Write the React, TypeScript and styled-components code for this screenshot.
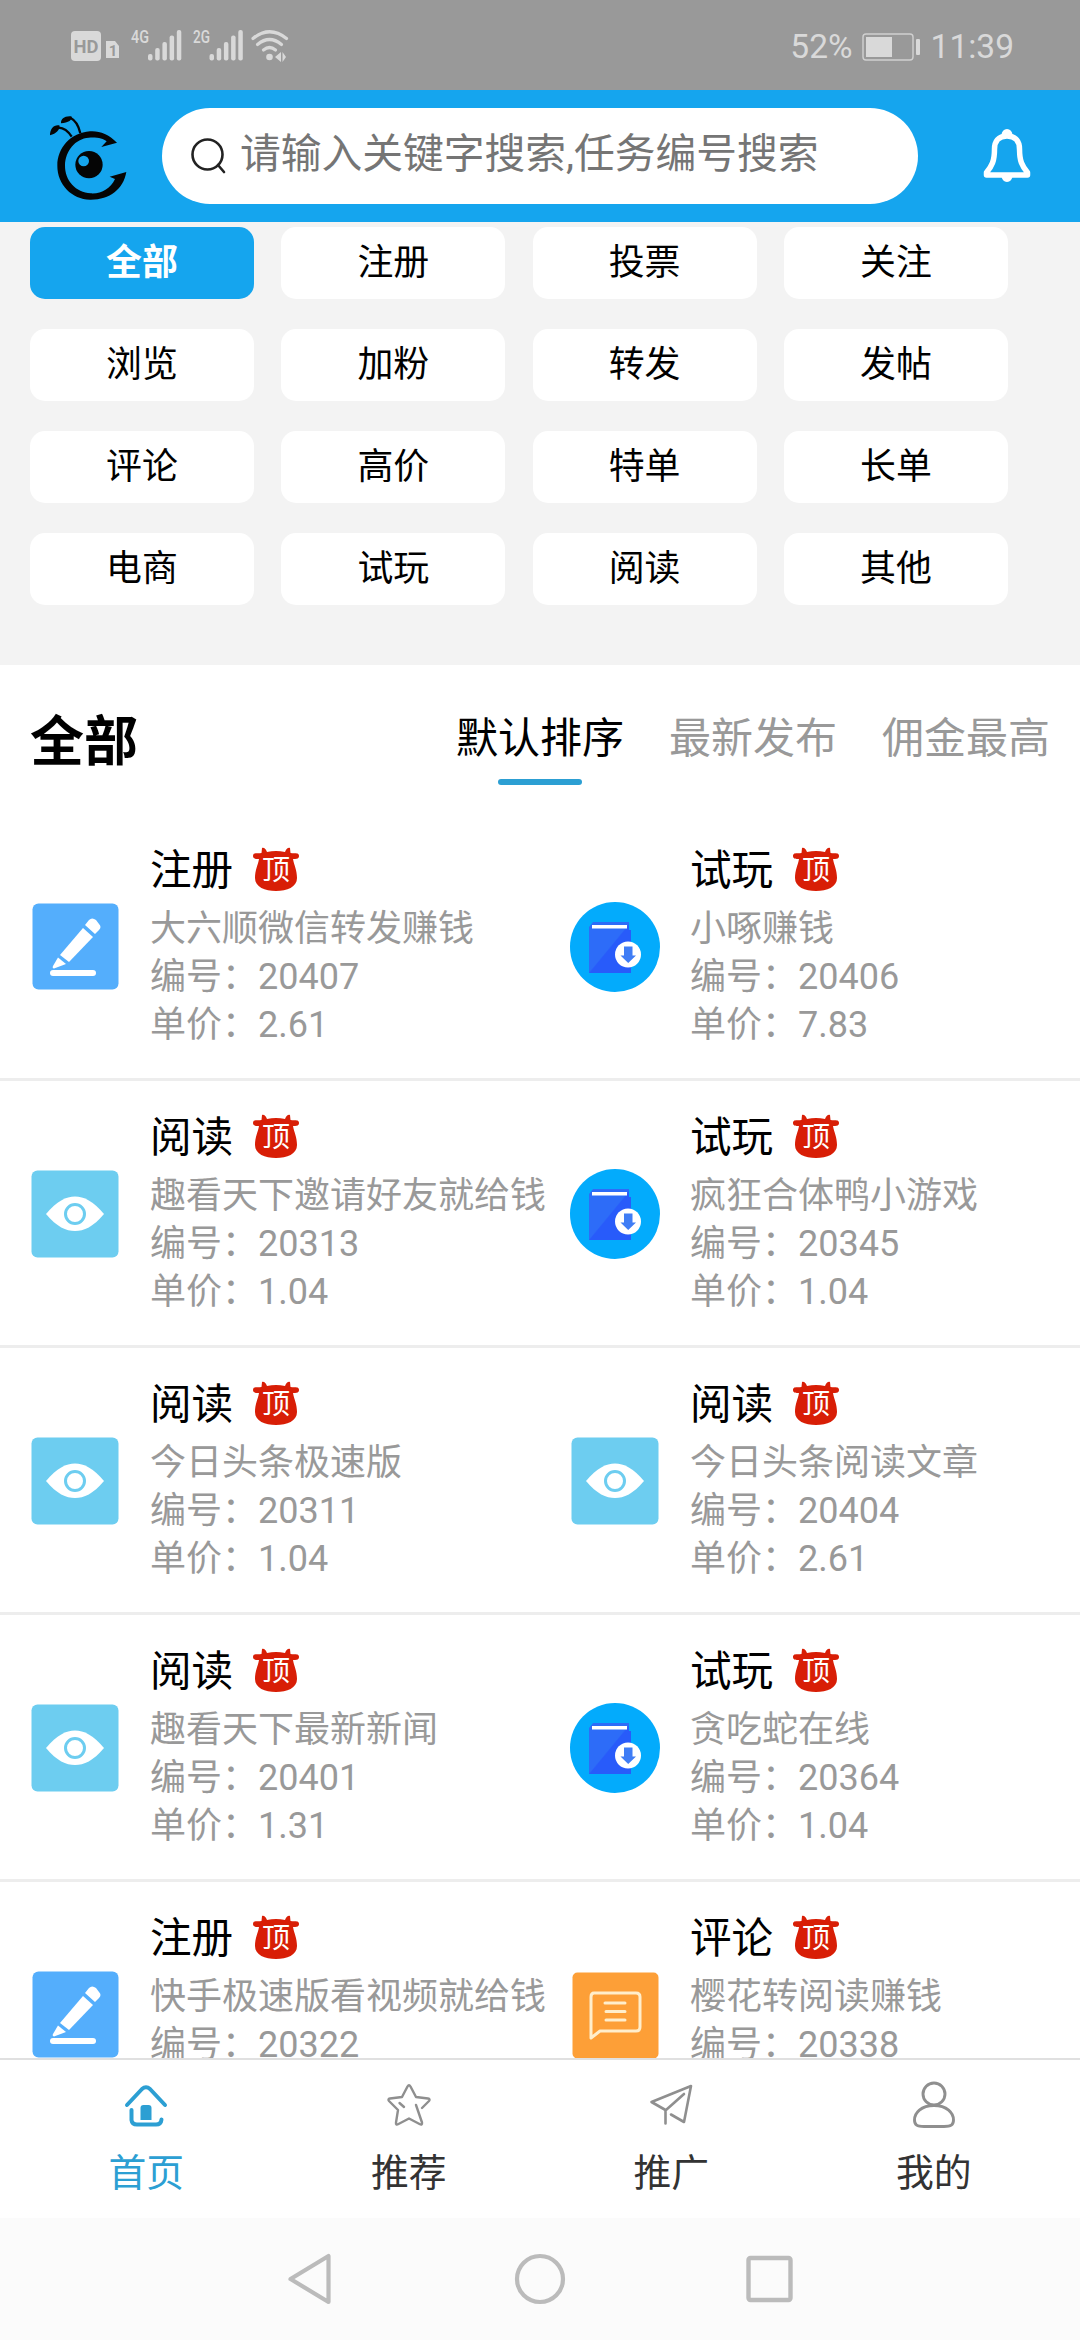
import React from 'react';
import styled, { createGlobalStyle } from 'styled-components';

const GlobalStyle = createGlobalStyle`
  * { box-sizing: border-box; }
  body {
    margin: 0;
    background: #fff;
    font-family: Roboto, "Noto Sans CJK SC", sans-serif;
  }
  svg { display: block; flex: none; overflow: visible; }
`;

const Screen = styled.div`
  width: 1080px;
  height: 2340px;
  display: flex;
  flex-direction: column;
  overflow: hidden;
  background: #fff;
`;

const StatusBar = styled.div`
  height: 90px;
  flex: none;
  display: flex;
  align-items: center;
  justify-content: space-between;
  padding: 0 66px 0 60px;
  background: #999;
  color: #d9d9d9;
`;

const StatusGroup = styled.div`
  display: flex;
  align-items: center;
  font-size: 33.5px;
  line-height: 40px;
  padding-top: 3px;
`;

const BatterySlot = styled.div`
  margin: 0 10px 0 9px;
`;

const Header = styled.header`
  height: 132px;
  flex: none;
  display: flex;
  align-items: center;
  padding: 0 49px 0 40px;
  background: #15a5ee;
`;

const SearchBox = styled.div`
  width: 756px;
  height: 96px;
  margin: 0 65px 0 22px;
  padding-left: 30px;
  display: flex;
  align-items: center;
  gap: 15px;
  border-radius: 48px;
  background: #fff;
`;

const Placeholder = styled.span`
  font-size: 40.75px;
  line-height: 60px;
  padding-bottom: 4px;
  color: #757575;
  white-space: nowrap;
`;

const Categories = styled.section`
  height: 443px;
  flex: none;
  display: grid;
  grid-template-columns: repeat(4, 224px);
  grid-auto-rows: 72px;
  column-gap: 27.3px;
  row-gap: 30px;
  padding: 5px 0 0 30px;
  background: #f3f3f3;
`;

const Chip = styled.div<{ $active?: boolean }>`
  display: flex;
  align-items: center;
  justify-content: center;
  border-radius: 15px;
  font-size: 35.9px;
  line-height: 50px;
  font-weight: ${p => (p.$active ? 700 : 400)};
  color: ${p => (p.$active ? '#fff' : '#000')};
  background: ${p => (p.$active ? '#15a5ee' : '#fff')};
`;

const SortBar = styled.section`
  height: 149px;
  flex: none;
  display: flex;
  justify-content: space-between;
  align-items: flex-start;
  padding: 36px 30px 0 30px;
`;

const SortTitle = styled.h2`
  margin: 0;
  padding-top: 2px;
  font-size: 54px;
  line-height: 80px;
  font-weight: 700;
  color: #000;
`;

const SortTabs = styled.div`
  display: flex;
  gap: 45px;
`;

const SortTab = styled.div<{ $active?: boolean }>`
  display: flex;
  flex-direction: column;
  align-items: center;
  font-size: 42px;
  line-height: 76px;
  color: ${p => (p.$active ? '#000' : '#999')};
  &::after {
    content: "";
    width: 84px;
    height: 6px;
    margin-top: 2px;
    border-radius: 3px;
    background: ${p => (p.$active ? '#2c9fd3' : 'transparent')};
  }
`;

const TaskList = styled.main`
  height: 1244px;
  flex: none;
  overflow: hidden;
`;

const TaskRow = styled.div`
  height: 267px;
  display: grid;
  grid-template-columns: 540px 540px;
  border-bottom: 3px solid #ededed;
`;

const Task = styled.article`
  display: flex;
  align-items: flex-start;
  padding-left: 30px;
  gap: 30px;
`;

const TaskIcon = styled.div`
  margin-top: 88px;
`;

const TaskText = styled.div`
  padding-top: 22px;
  white-space: nowrap;
`;

const TaskTitle = styled.div`
  display: flex;
  align-items: center;
  gap: 19.5px;
  height: 66px;
  font-size: 41.6px;
  line-height: 60px;
  color: #000;
`;

const TaskName = styled.span`
  padding-top: 4px;
`;

const TaskDetails = styled.div`
  padding-top: 3px;
`;

const TaskLine = styled.div`
  height: 48px;
  font-size: 36px;
  line-height: 48px;
  color: #999;
`;

const TabBar = styled.nav`
  height: 160px;
  flex: none;
  display: grid;
  grid-template-columns: repeat(4, 1fr);
  padding: 0 15px;
  border-top: 2px solid #e0e0e0;
  background: #fff;
`;

const TabItem = styled.div<{ $active?: boolean }>`
  display: flex;
  flex-direction: column;
  align-items: center;
  padding-top: 20px;
  font-size: 37.8px;
  line-height: 56px;
  color: ${p => (p.$active ? '#2c9fd3' : '#333')};
`;

const TabLabel = styled.span`
  margin-top: 15px;
`;

const SystemNav = styled.div`
  flex: 1;
  display: flex;
  align-items: center;
  justify-content: center;
  gap: 180px;
  background: #fbfbfb;
`;

const SignalIcons = () => (
  <svg width="240" height="50" viewBox="0 0 240 50" fill="#d9d9d9" fontFamily="Roboto, sans-serif">
    <rect x="11" y="11" width="30" height="30" rx="4" />
    <text x="26" y="32.5" fontSize="18" fontWeight="700" fill="#999" textAnchor="middle" textLength="25" lengthAdjust="spacingAndGlyphs">HD</text>
    <path d="M46 21h9l4 5v12H46z" />
    <text x="53" y="36" fontSize="15" fontWeight="700" fill="#999" textAnchor="middle">1</text>
    <text x="71" y="23" fontSize="19" fontWeight="500" textLength="18" lengthAdjust="spacingAndGlyphs">4G</text>
    <text x="133" y="23" fontSize="19" fontWeight="500" textLength="17" lengthAdjust="spacingAndGlyphs">2G</text>
    {[88, 149.5].map(x => (
      <g key={x}>
        <rect x={x} y="34" width="4.5" height="6.5" rx="2" />
        <rect x={x + 7.2} y="28" width="4.5" height="12.5" rx="2" />
        <rect x={x + 14.4} y="22" width="4.5" height="18.5" rx="2" />
        <rect x={x + 21.6} y="15.5" width="4.5" height="25" rx="2" />
        <rect x={x + 28.8} y="10" width="4.5" height="30.5" rx="2" />
      </g>
    ))}
    <g fill="none" stroke="#d9d9d9" strokeWidth="3.2" strokeLinecap="round">
      <path d="M193 18.5Q209.500 5 226.500 18.500" />
      <path d="M197.500 24.500Q209.500 14.500 221.500 24.500" />
      <path d="M203.500 30Q209.500 25 215.500 30" />
    </g>
    <circle cx="209.500" cy="37" r="3.300" />
    <path d="M215 37l6-5v10zM222.500 32l3.500 5-3.500 5z" />
  </svg>
);

const BatteryIcon = () => (
  <svg width="59" height="28" viewBox="0 0 59 28">
    <rect x="1" y="1" width="50" height="26" rx="3" fill="none" stroke="#d0d0d0" strokeWidth="1.4" />
    <rect x="4" y="4" width="26" height="20" fill="#d9d9d9" />
    <rect x="54" y="6" width="4" height="16" rx="1" fill="#d9d9d9" />
  </svg>
);

const Logo = () => (
  <svg width="100" height="105" viewBox="0 0 300 315" fill="#050505">
    <path d="M231 116C205 90 178 80 150 82C92 86 52 132 52 185C52 242 96 286 150 287C208 288 250 256 259 204L209 218L225 225C212 254 184 270 152 268C108 266 74 230 75 184C76 140 106 104 146 101C170 99 190 103 200 112L184 129Z" />
    <path fill="none" stroke="#050505" strokeWidth="7" d="M95 98C86 84 74 72 56 71M121 88C117 70 108 50 92 42" />
    <path d="M30 94C30 74 42 61 58 64C62 76 48 90 30 94ZM63 58C62 44 74 35 94 37C100 46 84 58 63 58Z" />
    <circle cx="147" cy="182" r="41" />
    <circle cx="131" cy="171" r="16" fill="#15a5ee" />
  </svg>
);

const SearchIcon = () => (
  <svg width="33" height="36" viewBox="0 0 33 36" fill="none" stroke="#222" strokeWidth="2.6" strokeLinecap="round">
    <circle cx="15.500" cy="16.500" r="15" />
    <path d="M26 27l6 7" />
  </svg>
);

const BellIcon = () => (
  <svg width="48" height="54" viewBox="0 0 48 54" fill="none" stroke="#fff" strokeWidth="5.500" strokeLinejoin="round">
    <path d="M24 7C15 7 11.500 13 11.500 20C11.500 32 9 37 3.500 43.500V46H44.500V43.500C39 37 36.500 32 36.500 20C36.500 13 33 7 24 7Z" />
    <path d="M18.500 6a5.500 6 0 0 1 11 0zM18.500 47a5.500 6 0 0 0 11 0z" fill="#fff" stroke="none" />
  </svg>
);

const TopBadge = () => (
  <svg width="46" height="45" viewBox="0 0 46 45">
    <path
      fill="#d81e06"
      d="M9 1C12 0 13 3 14 5C20 3.500 26 3.500 32 5C33 3 34 0 37 1L37.500 6C41 7 46 5 46 9C46 12 43 12 40 12C41 18 44 23 44 31C44 40 34 44 23 44C12 44 2 40 2 31C2 23 5 18 6 12C3 12 0 12 0 9C0 5 5 7 8.500 6Z"
    />
    <text x="23" y="33" textAnchor="middle" fontSize="28" fill="#fff" fontFamily='"Noto Sans CJK SC", sans-serif'>顶</text>
  </svg>
);

const PencilIcon = () => (
  <svg width="90" height="90" viewBox="0 0 90 90">
    <rect x="2.500" y="1.500" width="86" height="86" rx="6" fill="#54aefc" />
    <g fill="#fff">
      <path d="M30 53L53 26L63 35L39 60Z" />
      <path d="M55 23L59 18Q62 15 66 18L69 22Q72 25 69 28L65 32Z" />
      <path d="M28 55.500L36 62L24 66.500Q22 66 23 64Z" />
      <rect x="20" y="68" width="46" height="6" rx="3" />
    </g>
  </svg>
);

const EyeIcon = () => (
  <svg width="90" height="90" viewBox="0 0 90 90">
    <rect x="1.500" y="1.500" width="87" height="87" rx="6" fill="#6dcdf0" />
    <path d="M16 45C27 32 36 27.500 45 27.500C54 27.500 63 32 74 45C63 58 54 62 45 62C36 62 27 58 16 45Z" fill="#fff" />
    <circle cx="45" cy="45" r="9.500" fill="none" stroke="#6dcdf0" strokeWidth="3" />
  </svg>
);

const BookIcon = () => (
  <svg width="90" height="90" viewBox="0 0 90 90">
    <defs>
      <linearGradient id="cover" x1="0" y1="0" x2="1" y2="1">
        <stop offset=".49" stopColor="#2d6cf8" />
        <stop offset=".51" stopColor="#285bfa" />
      </linearGradient>
    </defs>
    <circle cx="45" cy="45" r="45" fill="#03abfc" />
    <path d="M23 20H59V28H61V71H19V25Z" fill="url(#cover)" />
    <rect x="22" y="23" width="35" height="3.500" fill="#fff" />
    <circle cx="58" cy="52.500" r="13" fill="#fff" />
    <path d="M54 44.500h8.500v9H66L58.200 61 50.500 53.500H54z" fill="#3f7df5" />
  </svg>
);

const CommentIcon = () => (
  <svg width="90" height="90" viewBox="0 0 90 90">
    <rect x="2.500" y="2.500" width="86" height="86" rx="5" fill="#fd9f37" />
    <g fill="none" stroke="#ffeecb" strokeWidth="3" strokeLinejoin="round" strokeLinecap="round">
      <path d="M24 23H66Q70 23 70 27V57Q70 61 66 61H30L21 68V27Q21 23 24 23Z" />
      <path d="M35 33H55M36 41.500H55M36 50H55" />
    </g>
  </svg>
);

const HomeIcon = () => (
  <svg width="50" height="50" viewBox="0 0 50 50" fill="none" stroke="#2c9fd3" strokeWidth="4" strokeLinecap="round" strokeLinejoin="round">
    <path d="M6 25L21 9Q25 5.500 29 9L44 25M10.500 30V40Q11 44.500 16 44.500H35Q40 44.500 40.500 39.500" />
    <path d="M19.500 40V28Q19.500 25 22.500 25H27.500Q30.500 25 30.500 28V40Z" fill="#2c9fd3" stroke="none" />
  </svg>
);

const StarIcon = () => (
  <svg width="50" height="50" viewBox="0 0 50 50" fill="none" stroke="#8f8f8f" strokeWidth="2.400" strokeLinecap="round" strokeLinejoin="round">
    <path d="M38 28L45 21Q46.500 19 44 18.500L32 17L26.500 6.500Q25 4 23.500 6.500L18 17L6 18.500Q3.500 19 5 21L14 30L12 42.500Q11.500 45.500 14.500 44L25 38.500L35.500 44Q38.500 45.500 38 42.500L32 25" />
    <path d="M15.500 23L20 27" />
  </svg>
);

const PlaneIcon = () => (
  <svg width="50" height="50" viewBox="0 0 50 50" fill="none" stroke="#8f8f8f" strokeWidth="2.600" strokeLinecap="round" strokeLinejoin="round">
    <path d="M19.500 43.500V30L5.500 22L45 6L38 42L25 34.500M20 30L38 14" />
  </svg>
);

const PersonIcon = () => (
  <svg width="50" height="50" viewBox="0 0 50 50" fill="none" stroke="#8f8f8f" strokeWidth="2.900">
    <ellipse cx="25" cy="14" rx="11" ry="11" />
    <path d="M25 25.500C12 25.500 5.500 33 5.500 40C5.500 45 8 46.500 15 46.500H35C42 46.500 44.500 45 44.500 40C44.500 33 38 25.500 25 25.500Z" />
  </svg>
);

type Kind = 'pencil' | 'eye' | 'book' | 'comment';
type TaskData = [kind: Kind, title: string, desc: string, id: string, price?: string];

const icons: Record<Kind, () => React.JSX.Element> = {
  pencil: PencilIcon,
  eye: EyeIcon,
  book: BookIcon,
  comment: CommentIcon,
};

const categories = ['全部', '注册', '投票', '关注', '浏览', '加粉', '转发', '发帖', '评论', '高价', '特单', '长单', '电商', '试玩', '阅读', '其他'];

const sorts = ['默认排序', '最新发布', '佣金最高'];

const rows: TaskData[][] = [
  [
    ['pencil', '注册', '大六顺微信转发赚钱', '20407', '2.61'],
    ['book', '试玩', '小啄赚钱', '20406', '7.83'],
  ],
  [
    ['eye', '阅读', '趣看天下邀请好友就给钱', '20313', '1.04'],
    ['book', '试玩', '疯狂合体鸭小游戏', '20345', '1.04'],
  ],
  [
    ['eye', '阅读', '今日头条极速版', '20311', '1.04'],
    ['eye', '阅读', '今日头条阅读文章', '20404', '2.61'],
  ],
  [
    ['eye', '阅读', '趣看天下最新新闻', '20401', '1.31'],
    ['book', '试玩', '贪吃蛇在线', '20364', '1.04'],
  ],
  [
    ['pencil', '注册', '快手极速版看视频就给钱', '20322'],
    ['comment', '评论', '樱花转阅读赚钱', '20338'],
  ],
];

const tabs = [
  { label: '首页', Icon: HomeIcon },
  { label: '推荐', Icon: StarIcon },
  { label: '推广', Icon: PlaneIcon },
  { label: '我的', Icon: PersonIcon },
];

export default function App() {
  return (
    <Screen lang="zh-CN">
      <GlobalStyle />
      <StatusBar>
        <SignalIcons />
        <StatusGroup>
          <span>52%</span>
          <BatterySlot><BatteryIcon /></BatterySlot>
          <span>11:39</span>
        </StatusGroup>
      </StatusBar>
      <Header>
        <Logo />
        <SearchBox>
          <SearchIcon />
          <Placeholder>请输入关键字搜索,任务编号搜索</Placeholder>
        </SearchBox>
        <BellIcon />
      </Header>
      <Categories>
        {categories.map((name, i) => (
          <Chip key={name} $active={i === 0}>{name}</Chip>
        ))}
      </Categories>
      <SortBar>
        <SortTitle>全部</SortTitle>
        <SortTabs>
          {sorts.map((name, i) => (
            <SortTab key={name} $active={i === 0}>{name}</SortTab>
          ))}
        </SortTabs>
      </SortBar>
      <TaskList>
        {rows.map((row, r) => (
          <TaskRow key={r}>
            {row.map(([kind, title, desc, id, price]) => {
              const Icon = icons[kind];
              return (
                <Task key={id}>
                  <TaskIcon><Icon /></TaskIcon>
                  <TaskText>
                    <TaskTitle>
                      <TaskName>{title}</TaskName>
                      <TopBadge />
                    </TaskTitle>
                    <TaskDetails>
                      <TaskLine>{desc}</TaskLine>
                      <TaskLine>编号：{id}</TaskLine>
                      {price && <TaskLine>单价：{price}</TaskLine>}
                    </TaskDetails>
                  </TaskText>
                </Task>
              );
            })}
          </TaskRow>
        ))}
      </TaskList>
      <TabBar>
        {tabs.map(({ label, Icon }, i) => (
          <TabItem key={label} $active={i === 0}>
            <Icon />
            <TabLabel>{label}</TabLabel>
          </TabItem>
        ))}
      </TabBar>
      <SystemNav>
        <svg width="50" height="52" viewBox="0 0 50 52" fill="none" stroke="#bbb" strokeWidth="4.200" strokeLinejoin="round">
          <path d="M43.500 3V49L5.500 26Z" />
        </svg>
        <svg width="50" height="52" viewBox="0 0 50 52" fill="none" stroke="#bbb" strokeWidth="4.200">
          <circle cx="25" cy="26" r="23" />
        </svg>
        <svg width="50" height="52" viewBox="0 0 50 52" fill="none" stroke="#bbb" strokeWidth="4.400">
          <rect x="3.500" y="5" width="42" height="42" rx="2" />
        </svg>
      </SystemNav>
    </Screen>
  );
}
